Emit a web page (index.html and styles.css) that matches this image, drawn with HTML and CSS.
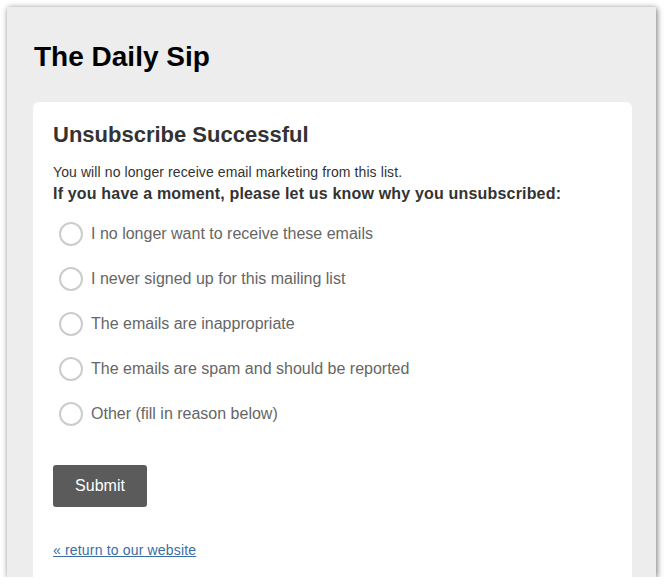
FILE: index.html
```html
<!DOCTYPE html>
<html lang="en">
<head>
    <meta charset="UTF-8">
    <meta name="viewport" content="width=device-width, initial-scale=1.0">
    <title>The Daily Sip - Unsubscribe</title>
    <link rel="stylesheet" href="styles.css">
</head>
<body>
    <div class="window">
        <h1 class="brand">The Daily Sip</h1>
        <div class="card">
            <h2>Unsubscribe Successful</h2>
            <p class="note">You will no longer receive email marketing from this list.</p>
            <p class="ask">If you have a moment, please let us know why you unsubscribed:</p>
            <form class="reasons">
                <label class="reason"><input type="radio" name="reason" value="1"><span>I no longer want to receive these emails</span></label>
                <label class="reason"><input type="radio" name="reason" value="2"><span>I never signed up for this mailing list</span></label>
                <label class="reason"><input type="radio" name="reason" value="3"><span>The emails are inappropriate</span></label>
                <label class="reason"><input type="radio" name="reason" value="4"><span>The emails are spam and should be reported</span></label>
                <label class="reason"><input type="radio" name="reason" value="5"><span>Other (fill in reason below)</span></label>
                <button type="button" class="submit">Submit</button>
            </form>
            <a href="#" class="back">&laquo; return to our website</a>
        </div>
    </div>
</body>
</html>
```

FILE: styles.css
```css
body {
    margin: 0;
    background: #fff;
    font-family: "Liberation Sans", Arial, sans-serif;
}
.window {
    margin: 7px 8px 0 7px;
    height: 570px;
    box-sizing: border-box;
    padding: 34px 24px 0 26px;
    background: #ededed;
    box-shadow: 1px 1px 6px rgba(0, 0, 0, 0.55);
    overflow: hidden;
}
.brand {
    margin: 0 0 29px 1px;
    font-size: 28px;
    line-height: 32px;
    font-weight: bold;
    color: #000;
}
.card {
    background: #fff;
    border-radius: 6px;
    padding: 20px 20px 40px;
    color: #333;
}
h2 {
    margin: 0;
    font-size: 22px;
    line-height: 26px;
    font-weight: bold;
}
.note {
    margin: 15px 0 0;
    font-size: 14px;
    line-height: 18px;
    letter-spacing: 0.1px;
}
.ask {
    margin: 3px 0 0;
    font-size: 16px;
    line-height: 20px;
    font-weight: bold;
    letter-spacing: 0.18px;
}
.reasons {
    margin-top: 7px;
}
.reason {
    display: flex;
    align-items: center;
    gap: 8px;
    height: 45px;
    padding-left: 6px;
    font-size: 16px;
    color: #666;
    cursor: pointer;
}
.reason input {
    appearance: none;
    -webkit-appearance: none;
    margin: 0;
    width: 24px;
    height: 24px;
    box-sizing: border-box;
    border: 2px solid #ccc;
    border-radius: 50%;
    background: #fff;
}
.reason input:checked {
    background: radial-gradient(#666 0 5px, #fff 6px);
}
.submit {
    display: block;
    margin-top: 29px;
    width: 94px;
    height: 42px;
    border: 0;
    border-radius: 3px;
    background: #5b5b5b;
    color: #fff;
    font-family: "Liberation Sans", Arial, sans-serif;
    font-size: 16px;
}
.back {
    display: inline-block;
    margin-top: 35px;
    font-size: 14px;
    line-height: 16px;
    letter-spacing: 0.17px;
    color: #3a6ea5;
}
```
